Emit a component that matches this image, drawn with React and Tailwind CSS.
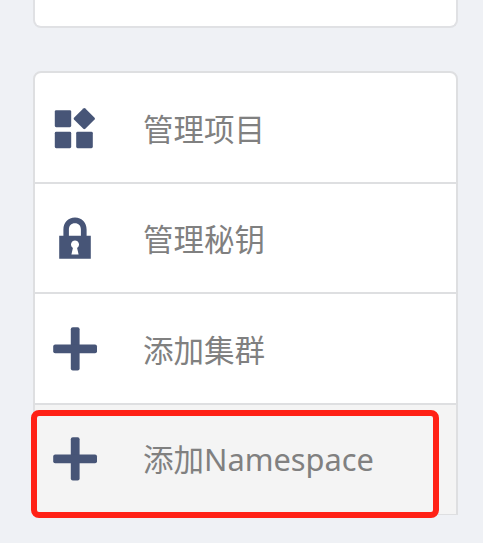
const ICON = 'block shrink-0 fill-[#475577]';

function ProjectsIcon() {
  return (
    <svg className={ICON} width="46" height="46" viewBox="0 0 46 46">
      <rect x="2.8" y="5.2" width="16.4" height="17" rx="1.4" />
      <rect x="2.8" y="26.8" width="16.4" height="16.4" rx="1.4" />
      <rect x="24.2" y="26.8" width="16.6" height="16.4" rx="1.4" />
      <path d="M31.3 3.4Q32.3 2.6 33.3 3.4L42.6 12.7Q43.4 13.6 42.6 14.5L33.3 23.8Q32.3 24.6 31.3 23.8L22 14.5Q21.2 13.6 22 12.7Z" />
    </svg>
  );
}

function LockIcon() {
  return (
    <svg className={ICON} width="46" height="46" viewBox="0 0 46 46">
      <path
        fillRule="evenodd"
        d="M7.2 20.8H11.4V14.5C11.4 7.5 16 2.4 23 2.4S34.6 7.5 34.6 14.5V20.8H38.8V43.7H7.2ZM16.9 20.8H28.9V14.6C28.9 10.6 26.6 8.2 22.9 8.2S16.9 10.6 16.9 14.6ZM23 25.6A4 4 0 0 0 20.9 33L19.4 39.6H26.6L25.1 33A4 4 0 0 0 23 25.6Z"
      />
    </svg>
  );
}

function PlusIcon() {
  return (
    <svg className={ICON} width="46" height="46" viewBox="0 0 46 46">
      <rect x="18.8" y="1.2" width="8.8" height="43.4" rx="2" />
      <rect x="1.2" y="18.5" width="43.8" height="8.8" rx="2" />
    </svg>
  );
}

const items = [
  { label: '管理项目', Icon: ProjectsIcon, row: 'h-[111px] border-b-2' },
  { label: '管理秘钥', Icon: LockIcon, row: 'h-[110px] border-b-2' },
  { label: '添加集群', Icon: PlusIcon, row: 'h-[111px] border-b-2' },
];

export default function App() {
  return (
    <div className="h-[543px] w-[483px] overflow-hidden bg-[#eff1f5] pl-[33px] font-['Noto_Sans','Noto_Sans_CJK_SC',sans-serif] text-[30.5px] leading-none text-[#808080]">
      <div className="h-7 w-[425px] rounded-b-lg border-2 border-t-0 border-[#e0e1e4] bg-white" />
      <div className="mt-[43px] w-[425px] rounded-t-lg border-2 border-b border-[#dedfe1] bg-white">
        {items.map(({ label, Icon, row }) => (
          <div key={label} className={`flex items-center border-[#dedfe1] pl-[17px] ${row}`}>
            <Icon />
            <span className="ml-[45px] whitespace-nowrap pt-[3px]">{label}</span>
          </div>
        ))}
        <div className="relative flex h-[109px] items-center bg-[#f4f4f4] pb-0.5 pl-[17px]">
          <PlusIcon />
          <span className="ml-[45px] whitespace-nowrap pt-0.5">
            添加<span className="text-[30.8px]">Namespace</span>
          </span>
          <div className="absolute -left-[4px] top-[5px] h-[108px] w-[408px] rounded-lg border-[6px] border-[#ff2116]" />
        </div>
      </div>
    </div>
  );
}
